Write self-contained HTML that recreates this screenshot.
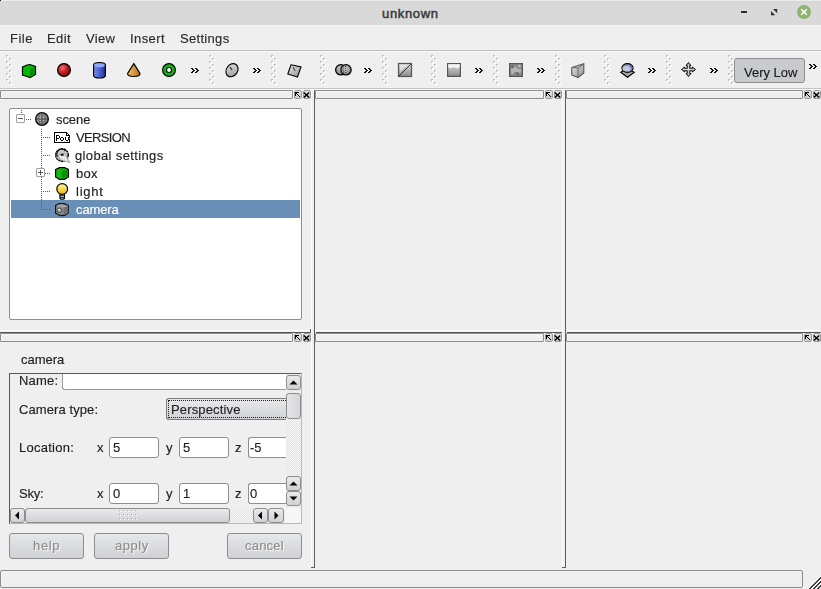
<!DOCTYPE html><html><head><meta charset="utf-8"><title>unknown</title><style>
*{margin:0;padding:0;box-sizing:border-box}
html,body{width:821px;height:589px;overflow:hidden;background:#efefef;font-family:"Liberation Sans",sans-serif;color:#2f2f2f;position:relative}
.a{position:absolute;white-space:nowrap}
svg{position:absolute;overflow:visible}
.t13{font-size:13px;line-height:15px;will-change:transform;-webkit-text-stroke:0.15px currentColor}
.dbar{height:9px;border:1px solid #8c8c8c;border-radius:1px;background:#efefef;box-shadow:inset 1px 1px 0 #f7f7f7}
.dbtn{width:8px;height:9px}
</style></head><body>
<div class="a" style="left:0;top:0;width:821px;height:25px;background:#d9d9d9;border-top:1px solid #ececec"></div>
<div class="a" style="left:0;top:1px;width:821px;height:1px;background:#d5d5d5"></div>
<div class="a" style="left:0;top:0;width:1px;height:1px;background:#222"></div>
<div class="a" style="left:0;top:25px;width:821px;height:1px;background:#f6f6f6"></div>
<div class="a" style="left:382px;top:6px;font-size:13px;line-height:15px;color:#3a3a3a;-webkit-text-stroke:0.5px #3a3a3a;letter-spacing:0.65px">unknown</div>
<div class="a" style="left:741px;top:11px;width:6px;height:2px;background:#2e2e2e"></div>
<svg style="left:770px;top:8px" width="9" height="9" shape-rendering="geometricPrecision"><path d="M3 1h4.2v4.2zM1 3l4.2 4.2h-4.2z" fill="#303030"/></svg>
<svg style="left:797px;top:5px" width="14" height="14"><circle cx="7" cy="7" r="7" fill="#8db371"/><path d="M4.2 4.2l5.6 5.6M9.8 4.2l-5.6 5.6" stroke="#fff" stroke-width="1.6"/></svg>
<div class="a t13" style="left:10px;top:31px;color:#2a2a2a;font-weight:normal;letter-spacing:0.47px;">File</div>
<div class="a t13" style="left:47px;top:31px;color:#2a2a2a;font-weight:normal;letter-spacing:0.43px;">Edit</div>
<div class="a t13" style="left:86px;top:31px;color:#2a2a2a;font-weight:normal;letter-spacing:0.30px;">View</div>
<div class="a t13" style="left:130px;top:31px;color:#2a2a2a;font-weight:normal;letter-spacing:0.40px;">Insert</div>
<div class="a t13" style="left:180px;top:31px;color:#2a2a2a;font-weight:normal;letter-spacing:0.31px;">Settings</div>
<div class="a" style="left:0;top:50px;width:821px;height:1px;background:#bfbfbf"></div>
<div class="a" style="left:0;top:51px;width:821px;height:1px;background:#fafafa"></div>
<div class="a" style="left:0;top:88px;width:821px;height:1px;background:#c4c4c4"></div>
<div class="a" style="left:0;top:89px;width:821px;height:1px;background:#fbfbfb"></div>
<svg style="left:6px;top:55px" width="6" height="31" shape-rendering="crispEdges"><rect x="1" y="1" width="2" height="2" fill="#fdfdfd"/><path d="M0 0h2v1h-1v1h-1z" fill="#bfbfbf"/><rect x="4" y="4" width="2" height="2" fill="#fdfdfd"/><path d="M3 3h2v1h-1v1h-1z" fill="#bfbfbf"/><rect x="1" y="7" width="2" height="2" fill="#fdfdfd"/><path d="M0 6h2v1h-1v1h-1z" fill="#bfbfbf"/><rect x="4" y="10" width="2" height="2" fill="#fdfdfd"/><path d="M3 9h2v1h-1v1h-1z" fill="#bfbfbf"/><rect x="1" y="13" width="2" height="2" fill="#fdfdfd"/><path d="M0 12h2v1h-1v1h-1z" fill="#bfbfbf"/><rect x="4" y="16" width="2" height="2" fill="#fdfdfd"/><path d="M3 15h2v1h-1v1h-1z" fill="#bfbfbf"/><rect x="1" y="19" width="2" height="2" fill="#fdfdfd"/><path d="M0 18h2v1h-1v1h-1z" fill="#bfbfbf"/><rect x="4" y="22" width="2" height="2" fill="#fdfdfd"/><path d="M3 21h2v1h-1v1h-1z" fill="#bfbfbf"/><rect x="1" y="25" width="2" height="2" fill="#fdfdfd"/><path d="M0 24h2v1h-1v1h-1z" fill="#bfbfbf"/><rect x="4" y="28" width="2" height="2" fill="#fdfdfd"/><path d="M3 27h2v1h-1v1h-1z" fill="#bfbfbf"/></svg>
<svg style="left:209px;top:55px" width="6" height="31" shape-rendering="crispEdges"><rect x="1" y="1" width="2" height="2" fill="#fdfdfd"/><path d="M0 0h2v1h-1v1h-1z" fill="#bfbfbf"/><rect x="4" y="4" width="2" height="2" fill="#fdfdfd"/><path d="M3 3h2v1h-1v1h-1z" fill="#bfbfbf"/><rect x="1" y="7" width="2" height="2" fill="#fdfdfd"/><path d="M0 6h2v1h-1v1h-1z" fill="#bfbfbf"/><rect x="4" y="10" width="2" height="2" fill="#fdfdfd"/><path d="M3 9h2v1h-1v1h-1z" fill="#bfbfbf"/><rect x="1" y="13" width="2" height="2" fill="#fdfdfd"/><path d="M0 12h2v1h-1v1h-1z" fill="#bfbfbf"/><rect x="4" y="16" width="2" height="2" fill="#fdfdfd"/><path d="M3 15h2v1h-1v1h-1z" fill="#bfbfbf"/><rect x="1" y="19" width="2" height="2" fill="#fdfdfd"/><path d="M0 18h2v1h-1v1h-1z" fill="#bfbfbf"/><rect x="4" y="22" width="2" height="2" fill="#fdfdfd"/><path d="M3 21h2v1h-1v1h-1z" fill="#bfbfbf"/><rect x="1" y="25" width="2" height="2" fill="#fdfdfd"/><path d="M0 24h2v1h-1v1h-1z" fill="#bfbfbf"/><rect x="4" y="28" width="2" height="2" fill="#fdfdfd"/><path d="M3 27h2v1h-1v1h-1z" fill="#bfbfbf"/></svg>
<svg style="left:271px;top:55px" width="6" height="31" shape-rendering="crispEdges"><rect x="1" y="1" width="2" height="2" fill="#fdfdfd"/><path d="M0 0h2v1h-1v1h-1z" fill="#bfbfbf"/><rect x="4" y="4" width="2" height="2" fill="#fdfdfd"/><path d="M3 3h2v1h-1v1h-1z" fill="#bfbfbf"/><rect x="1" y="7" width="2" height="2" fill="#fdfdfd"/><path d="M0 6h2v1h-1v1h-1z" fill="#bfbfbf"/><rect x="4" y="10" width="2" height="2" fill="#fdfdfd"/><path d="M3 9h2v1h-1v1h-1z" fill="#bfbfbf"/><rect x="1" y="13" width="2" height="2" fill="#fdfdfd"/><path d="M0 12h2v1h-1v1h-1z" fill="#bfbfbf"/><rect x="4" y="16" width="2" height="2" fill="#fdfdfd"/><path d="M3 15h2v1h-1v1h-1z" fill="#bfbfbf"/><rect x="1" y="19" width="2" height="2" fill="#fdfdfd"/><path d="M0 18h2v1h-1v1h-1z" fill="#bfbfbf"/><rect x="4" y="22" width="2" height="2" fill="#fdfdfd"/><path d="M3 21h2v1h-1v1h-1z" fill="#bfbfbf"/><rect x="1" y="25" width="2" height="2" fill="#fdfdfd"/><path d="M0 24h2v1h-1v1h-1z" fill="#bfbfbf"/><rect x="4" y="28" width="2" height="2" fill="#fdfdfd"/><path d="M3 27h2v1h-1v1h-1z" fill="#bfbfbf"/></svg>
<svg style="left:320px;top:55px" width="6" height="31" shape-rendering="crispEdges"><rect x="1" y="1" width="2" height="2" fill="#fdfdfd"/><path d="M0 0h2v1h-1v1h-1z" fill="#bfbfbf"/><rect x="4" y="4" width="2" height="2" fill="#fdfdfd"/><path d="M3 3h2v1h-1v1h-1z" fill="#bfbfbf"/><rect x="1" y="7" width="2" height="2" fill="#fdfdfd"/><path d="M0 6h2v1h-1v1h-1z" fill="#bfbfbf"/><rect x="4" y="10" width="2" height="2" fill="#fdfdfd"/><path d="M3 9h2v1h-1v1h-1z" fill="#bfbfbf"/><rect x="1" y="13" width="2" height="2" fill="#fdfdfd"/><path d="M0 12h2v1h-1v1h-1z" fill="#bfbfbf"/><rect x="4" y="16" width="2" height="2" fill="#fdfdfd"/><path d="M3 15h2v1h-1v1h-1z" fill="#bfbfbf"/><rect x="1" y="19" width="2" height="2" fill="#fdfdfd"/><path d="M0 18h2v1h-1v1h-1z" fill="#bfbfbf"/><rect x="4" y="22" width="2" height="2" fill="#fdfdfd"/><path d="M3 21h2v1h-1v1h-1z" fill="#bfbfbf"/><rect x="1" y="25" width="2" height="2" fill="#fdfdfd"/><path d="M0 24h2v1h-1v1h-1z" fill="#bfbfbf"/><rect x="4" y="28" width="2" height="2" fill="#fdfdfd"/><path d="M3 27h2v1h-1v1h-1z" fill="#bfbfbf"/></svg>
<svg style="left:382px;top:55px" width="6" height="31" shape-rendering="crispEdges"><rect x="1" y="1" width="2" height="2" fill="#fdfdfd"/><path d="M0 0h2v1h-1v1h-1z" fill="#bfbfbf"/><rect x="4" y="4" width="2" height="2" fill="#fdfdfd"/><path d="M3 3h2v1h-1v1h-1z" fill="#bfbfbf"/><rect x="1" y="7" width="2" height="2" fill="#fdfdfd"/><path d="M0 6h2v1h-1v1h-1z" fill="#bfbfbf"/><rect x="4" y="10" width="2" height="2" fill="#fdfdfd"/><path d="M3 9h2v1h-1v1h-1z" fill="#bfbfbf"/><rect x="1" y="13" width="2" height="2" fill="#fdfdfd"/><path d="M0 12h2v1h-1v1h-1z" fill="#bfbfbf"/><rect x="4" y="16" width="2" height="2" fill="#fdfdfd"/><path d="M3 15h2v1h-1v1h-1z" fill="#bfbfbf"/><rect x="1" y="19" width="2" height="2" fill="#fdfdfd"/><path d="M0 18h2v1h-1v1h-1z" fill="#bfbfbf"/><rect x="4" y="22" width="2" height="2" fill="#fdfdfd"/><path d="M3 21h2v1h-1v1h-1z" fill="#bfbfbf"/><rect x="1" y="25" width="2" height="2" fill="#fdfdfd"/><path d="M0 24h2v1h-1v1h-1z" fill="#bfbfbf"/><rect x="4" y="28" width="2" height="2" fill="#fdfdfd"/><path d="M3 27h2v1h-1v1h-1z" fill="#bfbfbf"/></svg>
<svg style="left:431px;top:55px" width="6" height="31" shape-rendering="crispEdges"><rect x="1" y="1" width="2" height="2" fill="#fdfdfd"/><path d="M0 0h2v1h-1v1h-1z" fill="#bfbfbf"/><rect x="4" y="4" width="2" height="2" fill="#fdfdfd"/><path d="M3 3h2v1h-1v1h-1z" fill="#bfbfbf"/><rect x="1" y="7" width="2" height="2" fill="#fdfdfd"/><path d="M0 6h2v1h-1v1h-1z" fill="#bfbfbf"/><rect x="4" y="10" width="2" height="2" fill="#fdfdfd"/><path d="M3 9h2v1h-1v1h-1z" fill="#bfbfbf"/><rect x="1" y="13" width="2" height="2" fill="#fdfdfd"/><path d="M0 12h2v1h-1v1h-1z" fill="#bfbfbf"/><rect x="4" y="16" width="2" height="2" fill="#fdfdfd"/><path d="M3 15h2v1h-1v1h-1z" fill="#bfbfbf"/><rect x="1" y="19" width="2" height="2" fill="#fdfdfd"/><path d="M0 18h2v1h-1v1h-1z" fill="#bfbfbf"/><rect x="4" y="22" width="2" height="2" fill="#fdfdfd"/><path d="M3 21h2v1h-1v1h-1z" fill="#bfbfbf"/><rect x="1" y="25" width="2" height="2" fill="#fdfdfd"/><path d="M0 24h2v1h-1v1h-1z" fill="#bfbfbf"/><rect x="4" y="28" width="2" height="2" fill="#fdfdfd"/><path d="M3 27h2v1h-1v1h-1z" fill="#bfbfbf"/></svg>
<svg style="left:493px;top:55px" width="6" height="31" shape-rendering="crispEdges"><rect x="1" y="1" width="2" height="2" fill="#fdfdfd"/><path d="M0 0h2v1h-1v1h-1z" fill="#bfbfbf"/><rect x="4" y="4" width="2" height="2" fill="#fdfdfd"/><path d="M3 3h2v1h-1v1h-1z" fill="#bfbfbf"/><rect x="1" y="7" width="2" height="2" fill="#fdfdfd"/><path d="M0 6h2v1h-1v1h-1z" fill="#bfbfbf"/><rect x="4" y="10" width="2" height="2" fill="#fdfdfd"/><path d="M3 9h2v1h-1v1h-1z" fill="#bfbfbf"/><rect x="1" y="13" width="2" height="2" fill="#fdfdfd"/><path d="M0 12h2v1h-1v1h-1z" fill="#bfbfbf"/><rect x="4" y="16" width="2" height="2" fill="#fdfdfd"/><path d="M3 15h2v1h-1v1h-1z" fill="#bfbfbf"/><rect x="1" y="19" width="2" height="2" fill="#fdfdfd"/><path d="M0 18h2v1h-1v1h-1z" fill="#bfbfbf"/><rect x="4" y="22" width="2" height="2" fill="#fdfdfd"/><path d="M3 21h2v1h-1v1h-1z" fill="#bfbfbf"/><rect x="1" y="25" width="2" height="2" fill="#fdfdfd"/><path d="M0 24h2v1h-1v1h-1z" fill="#bfbfbf"/><rect x="4" y="28" width="2" height="2" fill="#fdfdfd"/><path d="M3 27h2v1h-1v1h-1z" fill="#bfbfbf"/></svg>
<svg style="left:555px;top:55px" width="6" height="31" shape-rendering="crispEdges"><rect x="1" y="1" width="2" height="2" fill="#fdfdfd"/><path d="M0 0h2v1h-1v1h-1z" fill="#bfbfbf"/><rect x="4" y="4" width="2" height="2" fill="#fdfdfd"/><path d="M3 3h2v1h-1v1h-1z" fill="#bfbfbf"/><rect x="1" y="7" width="2" height="2" fill="#fdfdfd"/><path d="M0 6h2v1h-1v1h-1z" fill="#bfbfbf"/><rect x="4" y="10" width="2" height="2" fill="#fdfdfd"/><path d="M3 9h2v1h-1v1h-1z" fill="#bfbfbf"/><rect x="1" y="13" width="2" height="2" fill="#fdfdfd"/><path d="M0 12h2v1h-1v1h-1z" fill="#bfbfbf"/><rect x="4" y="16" width="2" height="2" fill="#fdfdfd"/><path d="M3 15h2v1h-1v1h-1z" fill="#bfbfbf"/><rect x="1" y="19" width="2" height="2" fill="#fdfdfd"/><path d="M0 18h2v1h-1v1h-1z" fill="#bfbfbf"/><rect x="4" y="22" width="2" height="2" fill="#fdfdfd"/><path d="M3 21h2v1h-1v1h-1z" fill="#bfbfbf"/><rect x="1" y="25" width="2" height="2" fill="#fdfdfd"/><path d="M0 24h2v1h-1v1h-1z" fill="#bfbfbf"/><rect x="4" y="28" width="2" height="2" fill="#fdfdfd"/><path d="M3 27h2v1h-1v1h-1z" fill="#bfbfbf"/></svg>
<svg style="left:604px;top:55px" width="6" height="31" shape-rendering="crispEdges"><rect x="1" y="1" width="2" height="2" fill="#fdfdfd"/><path d="M0 0h2v1h-1v1h-1z" fill="#bfbfbf"/><rect x="4" y="4" width="2" height="2" fill="#fdfdfd"/><path d="M3 3h2v1h-1v1h-1z" fill="#bfbfbf"/><rect x="1" y="7" width="2" height="2" fill="#fdfdfd"/><path d="M0 6h2v1h-1v1h-1z" fill="#bfbfbf"/><rect x="4" y="10" width="2" height="2" fill="#fdfdfd"/><path d="M3 9h2v1h-1v1h-1z" fill="#bfbfbf"/><rect x="1" y="13" width="2" height="2" fill="#fdfdfd"/><path d="M0 12h2v1h-1v1h-1z" fill="#bfbfbf"/><rect x="4" y="16" width="2" height="2" fill="#fdfdfd"/><path d="M3 15h2v1h-1v1h-1z" fill="#bfbfbf"/><rect x="1" y="19" width="2" height="2" fill="#fdfdfd"/><path d="M0 18h2v1h-1v1h-1z" fill="#bfbfbf"/><rect x="4" y="22" width="2" height="2" fill="#fdfdfd"/><path d="M3 21h2v1h-1v1h-1z" fill="#bfbfbf"/><rect x="1" y="25" width="2" height="2" fill="#fdfdfd"/><path d="M0 24h2v1h-1v1h-1z" fill="#bfbfbf"/><rect x="4" y="28" width="2" height="2" fill="#fdfdfd"/><path d="M3 27h2v1h-1v1h-1z" fill="#bfbfbf"/></svg>
<svg style="left:666px;top:55px" width="6" height="31" shape-rendering="crispEdges"><rect x="1" y="1" width="2" height="2" fill="#fdfdfd"/><path d="M0 0h2v1h-1v1h-1z" fill="#bfbfbf"/><rect x="4" y="4" width="2" height="2" fill="#fdfdfd"/><path d="M3 3h2v1h-1v1h-1z" fill="#bfbfbf"/><rect x="1" y="7" width="2" height="2" fill="#fdfdfd"/><path d="M0 6h2v1h-1v1h-1z" fill="#bfbfbf"/><rect x="4" y="10" width="2" height="2" fill="#fdfdfd"/><path d="M3 9h2v1h-1v1h-1z" fill="#bfbfbf"/><rect x="1" y="13" width="2" height="2" fill="#fdfdfd"/><path d="M0 12h2v1h-1v1h-1z" fill="#bfbfbf"/><rect x="4" y="16" width="2" height="2" fill="#fdfdfd"/><path d="M3 15h2v1h-1v1h-1z" fill="#bfbfbf"/><rect x="1" y="19" width="2" height="2" fill="#fdfdfd"/><path d="M0 18h2v1h-1v1h-1z" fill="#bfbfbf"/><rect x="4" y="22" width="2" height="2" fill="#fdfdfd"/><path d="M3 21h2v1h-1v1h-1z" fill="#bfbfbf"/><rect x="1" y="25" width="2" height="2" fill="#fdfdfd"/><path d="M0 24h2v1h-1v1h-1z" fill="#bfbfbf"/><rect x="4" y="28" width="2" height="2" fill="#fdfdfd"/><path d="M3 27h2v1h-1v1h-1z" fill="#bfbfbf"/></svg>
<svg style="left:728px;top:55px" width="6" height="31" shape-rendering="crispEdges"><rect x="1" y="1" width="2" height="2" fill="#fdfdfd"/><path d="M0 0h2v1h-1v1h-1z" fill="#bfbfbf"/><rect x="4" y="4" width="2" height="2" fill="#fdfdfd"/><path d="M3 3h2v1h-1v1h-1z" fill="#bfbfbf"/><rect x="1" y="7" width="2" height="2" fill="#fdfdfd"/><path d="M0 6h2v1h-1v1h-1z" fill="#bfbfbf"/><rect x="4" y="10" width="2" height="2" fill="#fdfdfd"/><path d="M3 9h2v1h-1v1h-1z" fill="#bfbfbf"/><rect x="1" y="13" width="2" height="2" fill="#fdfdfd"/><path d="M0 12h2v1h-1v1h-1z" fill="#bfbfbf"/><rect x="4" y="16" width="2" height="2" fill="#fdfdfd"/><path d="M3 15h2v1h-1v1h-1z" fill="#bfbfbf"/><rect x="1" y="19" width="2" height="2" fill="#fdfdfd"/><path d="M0 18h2v1h-1v1h-1z" fill="#bfbfbf"/><rect x="4" y="22" width="2" height="2" fill="#fdfdfd"/><path d="M3 21h2v1h-1v1h-1z" fill="#bfbfbf"/><rect x="1" y="25" width="2" height="2" fill="#fdfdfd"/><path d="M0 24h2v1h-1v1h-1z" fill="#bfbfbf"/><rect x="4" y="28" width="2" height="2" fill="#fdfdfd"/><path d="M3 27h2v1h-1v1h-1z" fill="#bfbfbf"/></svg>
<svg style="left:191px;top:68px" width="9" height="5" shape-rendering="crispEdges"><path d="M0 0h2v1h-2zM1 1h2v1h-2zM2 2h2v1h-2zM1 3h2v1h-2zM0 4h2v1h-2zM4 0h2v1h-2zM5 1h2v1h-2zM6 2h2v1h-2zM5 3h2v1h-2zM4 4h2v1h-2z" fill="#111"/></svg>
<svg style="left:253px;top:68px" width="9" height="5" shape-rendering="crispEdges"><path d="M0 0h2v1h-2zM1 1h2v1h-2zM2 2h2v1h-2zM1 3h2v1h-2zM0 4h2v1h-2zM4 0h2v1h-2zM5 1h2v1h-2zM6 2h2v1h-2zM5 3h2v1h-2zM4 4h2v1h-2z" fill="#111"/></svg>
<svg style="left:364px;top:68px" width="9" height="5" shape-rendering="crispEdges"><path d="M0 0h2v1h-2zM1 1h2v1h-2zM2 2h2v1h-2zM1 3h2v1h-2zM0 4h2v1h-2zM4 0h2v1h-2zM5 1h2v1h-2zM6 2h2v1h-2zM5 3h2v1h-2zM4 4h2v1h-2z" fill="#111"/></svg>
<svg style="left:475px;top:68px" width="9" height="5" shape-rendering="crispEdges"><path d="M0 0h2v1h-2zM1 1h2v1h-2zM2 2h2v1h-2zM1 3h2v1h-2zM0 4h2v1h-2zM4 0h2v1h-2zM5 1h2v1h-2zM6 2h2v1h-2zM5 3h2v1h-2zM4 4h2v1h-2z" fill="#111"/></svg>
<svg style="left:537px;top:68px" width="9" height="5" shape-rendering="crispEdges"><path d="M0 0h2v1h-2zM1 1h2v1h-2zM2 2h2v1h-2zM1 3h2v1h-2zM0 4h2v1h-2zM4 0h2v1h-2zM5 1h2v1h-2zM6 2h2v1h-2zM5 3h2v1h-2zM4 4h2v1h-2z" fill="#111"/></svg>
<svg style="left:648px;top:68px" width="9" height="5" shape-rendering="crispEdges"><path d="M0 0h2v1h-2zM1 1h2v1h-2zM2 2h2v1h-2zM1 3h2v1h-2zM0 4h2v1h-2zM4 0h2v1h-2zM5 1h2v1h-2zM6 2h2v1h-2zM5 3h2v1h-2zM4 4h2v1h-2z" fill="#111"/></svg>
<svg style="left:710px;top:68px" width="9" height="5" shape-rendering="crispEdges"><path d="M0 0h2v1h-2zM1 1h2v1h-2zM2 2h2v1h-2zM1 3h2v1h-2zM0 4h2v1h-2zM4 0h2v1h-2zM5 1h2v1h-2zM6 2h2v1h-2zM5 3h2v1h-2zM4 4h2v1h-2z" fill="#111"/></svg>
<svg style="left:809px;top:64px" width="9" height="5" shape-rendering="crispEdges"><path d="M0 0h2v1h-2zM1 1h2v1h-2zM2 2h2v1h-2zM1 3h2v1h-2zM0 4h2v1h-2zM4 0h2v1h-2zM5 1h2v1h-2zM6 2h2v1h-2zM5 3h2v1h-2zM4 4h2v1h-2z" fill="#111"/></svg>
<svg width="0" height="0" style="position:absolute"><defs>
<linearGradient id="gGreen" x1="0" y1="0" x2="1" y2="1"><stop offset="0" stop-color="#10d010"/><stop offset="1" stop-color="#008a00"/></linearGradient>
<radialGradient id="gRed" cx="0.38" cy="0.35" r="0.7"><stop offset="0" stop-color="#f07070"/><stop offset="0.5" stop-color="#c02020"/><stop offset="1" stop-color="#7a0a0a"/></radialGradient>
<linearGradient id="gBlue" x1="0" y1="0" x2="1" y2="0"><stop offset="0" stop-color="#7890f0"/><stop offset="0.6" stop-color="#4058c8"/><stop offset="1" stop-color="#203090"/></linearGradient>
<linearGradient id="gOrange" x1="0" y1="0" x2="1" y2="0"><stop offset="0" stop-color="#f8c060"/><stop offset="1" stop-color="#b87018"/></linearGradient>
<linearGradient id="gGray" x1="0" y1="0" x2="1" y2="1"><stop offset="0" stop-color="#e8e8e8"/><stop offset="1" stop-color="#909090"/></linearGradient>
<linearGradient id="gGrayV" x1="0" y1="0" x2="0" y2="1"><stop offset="0" stop-color="#e0e0e0"/><stop offset="1" stop-color="#8a8a8a"/></linearGradient>
<radialGradient id="gGlobe" cx="0.45" cy="0.4" r="0.65"><stop offset="0" stop-color="#c8c8c8"/><stop offset="0.7" stop-color="#8a8a8a"/><stop offset="1" stop-color="#505050"/></radialGradient>
<linearGradient id="gBulb" x1="0" y1="0" x2="0" y2="1"><stop offset="0" stop-color="#fff8a0"/><stop offset="1" stop-color="#f0b800"/></linearGradient>
<linearGradient id="gBtn" x1="0" y1="0" x2="0" y2="1"><stop offset="0" stop-color="#e6e7ea"/><stop offset="1" stop-color="#d0d1d4"/></linearGradient>
</defs></svg>
<svg style="left:22px;top:64px" width="15" height="14" viewBox="0 0 15 14"><path d="M0.5 3L5 1 L8 0.5 L13.5 2.5 V10.5 L8 13.5 L5 12.5 L0.5 11z" fill="#06b806" stroke="#000" stroke-width="1.2"/><path d="M8 5 L13 3 V10.5 L8 13z" fill="#068e06"/></svg>
<svg style="left:57px;top:63px" width="15" height="15" viewBox="0 0 15 15"><circle cx="7" cy="7" r="6.4" fill="url(#gRed)" stroke="#000" stroke-width="1.2"/></svg>
<svg style="left:93px;top:62px" width="13" height="17" viewBox="0 0 13 17"><path d="M0.6 3 A5.9 2.5 0 0 1 12.4 3 V13.5 A5.9 2.5 0 0 1 0.6 13.5z" fill="url(#gBlue)" stroke="#000" stroke-width="1.2"/><ellipse cx="6.5" cy="3.2" rx="5.3" ry="2" fill="#90a8f8"/></svg>
<svg style="left:127px;top:63px" width="14" height="15" viewBox="0 0 14 15"><path d="M6.8 0.6 L13 10.5 Q13 13.5 6.8 13.5 Q0.6 13.5 0.6 10.5z" fill="url(#gOrange)" stroke="#000" stroke-width="1.2"/></svg>
<svg style="left:162px;top:63px" width="15" height="15" viewBox="0 0 15 15"><circle cx="7" cy="7" r="6.4" fill="#14c014" stroke="#000" stroke-width="1.2"/><circle cx="7" cy="7" r="4.3" fill="none" stroke="#0a9a0a" stroke-width="1.2" opacity=".5"/><circle cx="7" cy="7" r="2.5" fill="#fff" stroke="#000" stroke-width="1.1"/></svg>
<svg style="left:225px;top:63px" width="14" height="15" viewBox="0 0 14 15"><ellipse cx="7" cy="7.2" rx="5.6" ry="7" transform="rotate(35 7 7.2)" fill="url(#gGray)" stroke="#000" stroke-width="1.1"/><path d="M5 4 L7 7" stroke="#222" stroke-width="1.2"/></svg>
<svg style="left:287px;top:64px" width="15" height="14" viewBox="0 0 15 14"><path d="M4 0.8 L14 3 L10.5 13 L0.8 10z" fill="url(#gGray)" stroke="#000" stroke-width="1.1"/><path d="M6 3 L8 7" stroke="#333" stroke-width="1"/></svg>
<svg style="left:335px;top:64px" width="17" height="12" viewBox="0 0 17 12"><circle cx="5.8" cy="5.8" r="5.2" fill="url(#gGlobe)" stroke="#000" stroke-width="1.2"/><circle cx="11" cy="5.8" r="5.2" fill="url(#gGlobe)" stroke="#000" stroke-width="1.2"/><path d="M8.4 1.5V10M6.5 2V10M10.5 2V10" stroke="#333" stroke-width="0.8" stroke-dasharray="1 1"/></svg>
<svg style="left:398px;top:63px" width="15" height="15" viewBox="0 0 15 15"><rect x="0.5" y="0.5" width="13" height="13" fill="url(#gGrayV)" stroke="#555" stroke-width="1.2"/><path d="M1 13 L13 1" stroke="#333" stroke-width="1"/><path d="M2 9 L9 2 H2z" fill="#eee" opacity=".6"/></svg>
<svg style="left:447px;top:63px" width="15" height="15" viewBox="0 0 15 15"><rect x="0.6" y="0.6" width="12.8" height="12.8" fill="url(#gGrayV)" stroke="#555" stroke-width="1.2"/><path d="M1.2 1.2H12.8V4.5 L10 5.8 L7 4.8 L4 5.8 L1.2 4.8z" fill="#f2f2f2"/><path d="M1.2 4.8 L4 5.8 L7 4.8 L10 5.8 L12.8 4.5" stroke="#b0b0b0" fill="none" stroke-width=".7"/></svg>
<svg style="left:509px;top:63px" width="15" height="15" viewBox="0 0 15 15"><rect x="0.6" y="0.6" width="12.8" height="12.8" fill="#8a8a8a" stroke="#555" stroke-width="1.2"/><path d="M2 6 Q4 2 7 4 Q9 7 12 6 V9 Q10 11 8 9 Q5 8 4 11 Q2 12 2 9z" fill="#b4b4b4"/><circle cx="3.5" cy="3.8" r="1.6" fill="#6a6a6a"/><circle cx="8.5" cy="10.5" r="1.5" fill="#6a6a6a"/><circle cx="10.5" cy="3" r="1.2" fill="#c8c8c8"/></svg>
<svg style="left:571px;top:63px" width="14" height="16" viewBox="0 0 14 16"><path d="M0.8 4.5 L12.8 0.8 V10 L7 14.5 L0.8 12z" fill="url(#gGray)" stroke="#555" stroke-width="1.1"/><path d="M7 5 V14 M0.8 4.5 L7 5 L12.8 0.8" stroke="#666" fill="none" stroke-width="1"/></svg>
<svg style="left:620px;top:63px" width="15" height="15" viewBox="0 0 15 15"><path d="M7.5 5.5 L14.3 9.2 L7.5 14.3 L0.7 9.2z" fill="#8c8c8c" stroke="#000" stroke-width="1.1"/><path d="M7.5 7 L13 9.2 L7.5 13 L2 9.2z" fill="#a8a8a8"/><ellipse cx="7.5" cy="5" rx="5.6" ry="4.4" fill="#8a98c8" stroke="#000" stroke-width="1.1"/><ellipse cx="6.5" cy="5.6" rx="4" ry="2.6" fill="#c4c8d8"/><path d="M10 2.5 Q12 3.5 12 5.5" stroke="#5060e0" stroke-width="1.4" fill="none"/></svg>
<svg style="left:681px;top:62px" width="16" height="16" viewBox="0 0 16 16"><polygon points="6.20,3.50 5.10,3.50 7.50,0.50 9.90,3.50 8.80,3.50 8.80,6.20 11.50,6.20 11.50,5.10 14.50,7.50 11.50,9.90 11.50,8.80 8.80,8.80 8.80,11.50 9.90,11.50 7.50,14.50 5.10,11.50 6.20,11.50 6.20,8.80 3.50,8.80 3.50,9.90 0.50,7.50 3.50,5.10 3.50,6.20 6.20,6.20" fill="#b0b0b0" stroke="#0a0a0a" stroke-width="1" stroke-linejoin="round"/><path d="M7.5 2.5V12.5M2.5 7.5H12.5" stroke="#e0e0e0" stroke-width=".7"/></svg>
<div class="a" style="left:734px;top:58px;width:71px;height:25px;border:1px solid #8e8e8e;border-radius:3px;background:#c9cacd"></div>
<div class="a t13" style="left:744px;top:65px;color:#1a1a1a;font-weight:normal;">Very Low</div>
<div class="a dbar" style="left:0px;top:90px;width:293px"></div>
<div class="a" style="left:294px;top:90px;width:8px;height:9px;border:1px solid #9a9a9a;border-radius:2px;background:linear-gradient(#e4e4e4,#cdcdcd)"></div>
<svg style="left:295px;top:92px" width="7" height="7" shape-rendering="crispEdges"><path d="M0 0h4v1h-2v1h1v1h1v1h1v1h-1v-1h-1v-1h-1v-1h-1v2h-1z" fill="#000"/></svg>
<div class="a" style="left:303px;top:90px;width:8px;height:9px;border:1px solid #9a9a9a;border-radius:2px;background:linear-gradient(#e4e4e4,#cdcdcd)"></div>
<svg style="left:303px;top:92px" width="7" height="6"><path d="M0.8 0.5l5.4 5M6.2 0.5l-5.4 5" stroke="#000" stroke-width="1.5"/></svg>
<div class="a dbar" style="left:315px;top:90px;width:229px"></div>
<div class="a" style="left:545px;top:90px;width:8px;height:9px;border:1px solid #9a9a9a;border-radius:2px;background:linear-gradient(#e4e4e4,#cdcdcd)"></div>
<svg style="left:546px;top:92px" width="7" height="7" shape-rendering="crispEdges"><path d="M0 0h4v1h-2v1h1v1h1v1h1v1h-1v-1h-1v-1h-1v-1h-1v2h-1z" fill="#000"/></svg>
<div class="a" style="left:554px;top:90px;width:8px;height:9px;border:1px solid #9a9a9a;border-radius:2px;background:linear-gradient(#e4e4e4,#cdcdcd)"></div>
<svg style="left:554px;top:92px" width="7" height="6"><path d="M0.8 0.5l5.4 5M6.2 0.5l-5.4 5" stroke="#000" stroke-width="1.5"/></svg>
<div class="a dbar" style="left:566px;top:90px;width:237px"></div>
<div class="a" style="left:804px;top:90px;width:8px;height:9px;border:1px solid #9a9a9a;border-radius:2px;background:linear-gradient(#e4e4e4,#cdcdcd)"></div>
<svg style="left:805px;top:92px" width="7" height="7" shape-rendering="crispEdges"><path d="M0 0h4v1h-2v1h1v1h1v1h1v1h-1v-1h-1v-1h-1v-1h-1v2h-1z" fill="#000"/></svg>
<div class="a" style="left:813px;top:90px;width:8px;height:9px;border:1px solid #9a9a9a;border-radius:2px;background:linear-gradient(#e4e4e4,#cdcdcd)"></div>
<svg style="left:813px;top:92px" width="7" height="6"><path d="M0.8 0.5l5.4 5M6.2 0.5l-5.4 5" stroke="#000" stroke-width="1.5"/></svg>
<div class="a dbar" style="left:0px;top:333px;width:293px"></div>
<div class="a" style="left:294px;top:333px;width:8px;height:9px;border:1px solid #9a9a9a;border-radius:2px;background:linear-gradient(#e4e4e4,#cdcdcd)"></div>
<svg style="left:295px;top:335px" width="7" height="7" shape-rendering="crispEdges"><path d="M0 0h4v1h-2v1h1v1h1v1h1v1h-1v-1h-1v-1h-1v-1h-1v2h-1z" fill="#000"/></svg>
<div class="a" style="left:303px;top:333px;width:8px;height:9px;border:1px solid #9a9a9a;border-radius:2px;background:linear-gradient(#e4e4e4,#cdcdcd)"></div>
<svg style="left:303px;top:335px" width="7" height="6"><path d="M0.8 0.5l5.4 5M6.2 0.5l-5.4 5" stroke="#000" stroke-width="1.5"/></svg>
<div class="a dbar" style="left:315px;top:333px;width:229px"></div>
<div class="a" style="left:545px;top:333px;width:8px;height:9px;border:1px solid #9a9a9a;border-radius:2px;background:linear-gradient(#e4e4e4,#cdcdcd)"></div>
<svg style="left:546px;top:335px" width="7" height="7" shape-rendering="crispEdges"><path d="M0 0h4v1h-2v1h1v1h1v1h1v1h-1v-1h-1v-1h-1v-1h-1v2h-1z" fill="#000"/></svg>
<div class="a" style="left:554px;top:333px;width:8px;height:9px;border:1px solid #9a9a9a;border-radius:2px;background:linear-gradient(#e4e4e4,#cdcdcd)"></div>
<svg style="left:554px;top:335px" width="7" height="6"><path d="M0.8 0.5l5.4 5M6.2 0.5l-5.4 5" stroke="#000" stroke-width="1.5"/></svg>
<div class="a dbar" style="left:566px;top:333px;width:237px"></div>
<div class="a" style="left:804px;top:333px;width:8px;height:9px;border:1px solid #9a9a9a;border-radius:2px;background:linear-gradient(#e4e4e4,#cdcdcd)"></div>
<svg style="left:805px;top:335px" width="7" height="7" shape-rendering="crispEdges"><path d="M0 0h4v1h-2v1h1v1h1v1h1v1h-1v-1h-1v-1h-1v-1h-1v2h-1z" fill="#000"/></svg>
<div class="a" style="left:813px;top:333px;width:8px;height:9px;border:1px solid #9a9a9a;border-radius:2px;background:linear-gradient(#e4e4e4,#cdcdcd)"></div>
<svg style="left:813px;top:335px" width="7" height="6"><path d="M0.8 0.5l5.4 5M6.2 0.5l-5.4 5" stroke="#000" stroke-width="1.5"/></svg>
<div class="a" style="left:0;top:330px;width:311px;height:1px;background:#fdfdfd"></div>
<div class="a" style="left:0;top:332px;width:311px;height:1px;background:#5a5a5a"></div>
<div class="a" style="left:310px;top:329px;width:1px;height:4px;background:#5a5a5a"></div>
<div class="a" style="left:316px;top:330px;width:247px;height:1px;background:#fdfdfd"></div>
<div class="a" style="left:316px;top:332px;width:247px;height:1px;background:#5a5a5a"></div>
<div class="a" style="left:562px;top:329px;width:1px;height:4px;background:#5a5a5a"></div>
<div class="a" style="left:567px;top:330px;width:254px;height:1px;background:#fdfdfd"></div>
<div class="a" style="left:567px;top:332px;width:254px;height:1px;background:#5a5a5a"></div>
<div class="a" style="left:311px;top:90px;width:1px;height:477px;background:#fbfbfb"></div>
<div class="a" style="left:314px;top:90px;width:1px;height:478px;background:#5f5f5f"></div>
<div class="a" style="left:311px;top:567px;width:3px;height:1px;background:#5f5f5f"></div>
<div class="a" style="left:562px;top:90px;width:1px;height:477px;background:#fbfbfb"></div>
<div class="a" style="left:565px;top:90px;width:1px;height:478px;background:#5f5f5f"></div>
<div class="a" style="left:562px;top:567px;width:3px;height:1px;background:#5f5f5f"></div>
<div class="a" style="left:9px;top:108px;width:293px;height:212px;background:#fff;border:1px solid #8e8e8e;border-radius:2px"></div>
<div class="a" style="left:11px;top:200px;width:289px;height:18px;background:#6a8fb6"></div>
<div class="a t13" style="left:56px;top:112px;color:#1e1e1e;font-weight:normal;letter-spacing:-0.08px;">scene</div>
<div class="a t13" style="left:76px;top:130px;color:#1e1e1e;font-weight:normal;letter-spacing:-0.65px;">VERSION</div>
<div class="a t13" style="left:75px;top:148px;color:#1e1e1e;font-weight:normal;letter-spacing:0.36px;">global settings</div>
<div class="a t13" style="left:76px;top:166px;color:#1e1e1e;font-weight:normal;letter-spacing:0.25px;">box</div>
<div class="a t13" style="left:76px;top:184px;color:#1e1e1e;font-weight:normal;letter-spacing:0.75px;">light</div>
<div class="a t13" style="left:76px;top:202px;color:#fff;font-weight:normal;letter-spacing:-0.12px;">camera</div>
<svg style="left:21px;top:110px" width="1" height="4" shape-rendering="crispEdges"><path d="M0 0h1v1h-1zM0 2h1v1h-1z" fill="#5a5a5a"/></svg>
<div class="a" style="left:16px;top:114px;width:9px;height:9px;border:1px solid #a0a0a0;border-radius:1px;background:#fff"></div>
<div class="a" style="left:18px;top:118px;width:5px;height:1px;background:#5a5a5a"></div>
<svg style="left:26px;top:119px" width="5" height="1" shape-rendering="crispEdges"><path d="M0 0h1v1h-1zM2 0h1v1h-1zM4 0h1v1h-1z" fill="#5a5a5a"/></svg>
<svg style="left:41px;top:129px" width="1" height="81" shape-rendering="crispEdges"><path d="M0 0h1v1h-1zM0 2h1v1h-1zM0 4h1v1h-1zM0 6h1v1h-1zM0 8h1v1h-1zM0 10h1v1h-1zM0 12h1v1h-1zM0 14h1v1h-1zM0 16h1v1h-1zM0 18h1v1h-1zM0 20h1v1h-1zM0 22h1v1h-1zM0 24h1v1h-1zM0 26h1v1h-1zM0 28h1v1h-1zM0 30h1v1h-1zM0 32h1v1h-1zM0 34h1v1h-1zM0 36h1v1h-1zM0 38h1v1h-1zM0 40h1v1h-1zM0 42h1v1h-1zM0 44h1v1h-1zM0 46h1v1h-1zM0 48h1v1h-1zM0 50h1v1h-1zM0 52h1v1h-1zM0 54h1v1h-1zM0 56h1v1h-1zM0 58h1v1h-1zM0 60h1v1h-1zM0 62h1v1h-1zM0 64h1v1h-1zM0 66h1v1h-1zM0 68h1v1h-1zM0 70h1v1h-1zM0 72h1v1h-1zM0 74h1v1h-1zM0 76h1v1h-1zM0 78h1v1h-1zM0 80h1v1h-1z" fill="#5a5a5a"/></svg>
<svg style="left:43px;top:137px" width="8" height="1" shape-rendering="crispEdges"><path d="M0 0h1v1h-1zM2 0h1v1h-1zM4 0h1v1h-1zM6 0h1v1h-1z" fill="#5a5a5a"/></svg>
<svg style="left:43px;top:155px" width="8" height="1" shape-rendering="crispEdges"><path d="M0 0h1v1h-1zM2 0h1v1h-1zM4 0h1v1h-1zM6 0h1v1h-1z" fill="#5a5a5a"/></svg>
<svg style="left:43px;top:173px" width="8" height="1" shape-rendering="crispEdges"><path d="M0 0h1v1h-1zM2 0h1v1h-1zM4 0h1v1h-1zM6 0h1v1h-1z" fill="#5a5a5a"/></svg>
<svg style="left:43px;top:191px" width="8" height="1" shape-rendering="crispEdges"><path d="M0 0h1v1h-1zM2 0h1v1h-1zM4 0h1v1h-1zM6 0h1v1h-1z" fill="#5a5a5a"/></svg>
<svg style="left:43px;top:209px" width="8" height="1" shape-rendering="crispEdges"><path d="M0 0h1v1h-1zM2 0h1v1h-1zM4 0h1v1h-1zM6 0h1v1h-1z" fill="#5a5a5a"/></svg>
<div class="a" style="left:36px;top:168px;width:9px;height:9px;border:1px solid #a0a0a0;border-radius:1px;background:#fff"></div>
<div class="a" style="left:38px;top:172px;width:5px;height:1px;background:#5a5a5a"></div>
<div class="a" style="left:40px;top:170px;width:1px;height:5px;background:#5a5a5a"></div>
<svg style="left:35px;top:112px" width="14" height="14" viewBox="0 0 14 14"><circle cx="7" cy="7" r="6.3" fill="url(#gGlobe)" stroke="#000" stroke-width="1.3"/><path d="M7 1V13M1 7H13" stroke="#3a3a3a" stroke-width="1" fill="none"/><ellipse cx="7" cy="7" rx="3.2" ry="6" fill="none" stroke="#555" stroke-width=".7"/><path d="M1.5 4.2H12.5M1.5 9.8H12.5" stroke="#666" stroke-width=".6"/></svg>
<svg style="left:54px;top:132px" width="16" height="11" shape-rendering="crispEdges"><path d="M1 1h13v1h1v1h1v8h-15z" fill="#fff"/><path d="M0 0h1v1h-1zM0 1h1v1h-1zM0 2h1v1h-1zM0 3h1v1h-1zM0 4h1v1h-1zM0 5h1v1h-1zM0 6h1v1h-1zM0 7h1v1h-1zM0 8h1v1h-1zM0 9h1v1h-1zM0 10h1v1h-1zM1 0h1v1h-1zM1 10h1v1h-1zM2 0h1v1h-1zM2 3h1v1h-1zM2 4h1v1h-1zM2 5h1v1h-1zM2 6h1v1h-1zM2 7h1v1h-1zM2 8h1v1h-1zM2 10h1v1h-1zM3 0h1v1h-1zM3 3h1v1h-1zM3 6h1v1h-1zM3 10h1v1h-1zM4 0h1v1h-1zM4 3h1v1h-1zM4 6h1v1h-1zM4 10h1v1h-1zM5 0h1v1h-1zM5 4h1v1h-1zM5 5h1v1h-1zM5 10h1v1h-1zM6 0h1v1h-1zM6 6h1v1h-1zM6 7h1v1h-1zM6 10h1v1h-1zM7 0h1v1h-1zM7 5h1v1h-1zM7 8h1v1h-1zM7 10h1v1h-1zM8 0h1v1h-1zM8 5h1v1h-1zM8 8h1v1h-1zM8 10h1v1h-1zM9 0h1v1h-1zM9 6h1v1h-1zM9 7h1v1h-1zM9 10h1v1h-1zM10 0h1v1h-1zM10 10h1v1h-1zM11 0h1v1h-1zM11 5h1v1h-1zM11 6h1v1h-1zM11 7h1v1h-1zM11 10h1v1h-1zM12 0h1v1h-1zM12 1h1v1h-1zM12 2h1v1h-1zM12 3h1v1h-1zM12 8h1v1h-1zM12 10h1v1h-1zM13 1h1v1h-1zM13 3h1v1h-1zM13 8h1v1h-1zM13 10h1v1h-1zM14 2h1v1h-1zM14 3h1v1h-1zM14 5h1v1h-1zM14 6h1v1h-1zM14 7h1v1h-1zM14 10h1v1h-1zM15 3h1v1h-1zM15 4h1v1h-1zM15 5h1v1h-1zM15 6h1v1h-1zM15 7h1v1h-1zM15 8h1v1h-1zM15 9h1v1h-1zM15 10h1v1h-1z" fill="#000"/><path d="M9.5 9.5h1M12.5 9.5h1M14.5 6.5h1" stroke="#f4b0b0" stroke-width="1"/></svg>
<svg style="left:55px;top:148px" width="16" height="16" viewBox="0 0 16 16"><circle cx="7" cy="7" r="6.3" fill="#c8c8c8" stroke="#000" stroke-width="1.4" stroke-dasharray="2.2 .6"/><path d="M2.6 8.5 A4.6 4.6 0 0 1 10.5 3.2" stroke="#1a1a1a" stroke-width="1.2" fill="none"/><path d="M3.5 8 Q6 4.5 9.5 5.5 L15 14.5 L11 13.5 Q6 12.5 4 10z" fill="#e6e6e6" stroke="#777" stroke-width=".6"/><ellipse cx="7.2" cy="6.8" rx="1.8" ry="1.1" fill="#222"/></svg>
<svg style="left:55px;top:167px" width="15" height="13" viewBox="0 0 15 13"><path d="M0.6 2.5L4.5 0.6 L9.5 0.6 L13.4 2.5 V10 L9.5 12.4 L4.5 12.4 L0.6 10z" fill="#10b810" stroke="#000" stroke-width="1.2"/><path d="M7 4 L13 2.5 V10 L7 12z" fill="#079007"/></svg>
<svg style="left:56px;top:183px" width="13" height="17" viewBox="0 0 13 17"><rect x="3.9" y="10.5" width="4.6" height="5.6" rx="1" fill="#f4f4f4" stroke="#000" stroke-width="1.1"/><path d="M4 12.7H8.4M4 14.4H8.4" stroke="#000" stroke-width=".9"/><circle cx="6.2" cy="6" r="5.4" fill="url(#gBulb)" stroke="#000" stroke-width="1.2"/></svg>
<svg style="left:55px;top:203px" width="14" height="14" viewBox="0 0 14 14"><path d="M0.6 2.5L3.5 0.8 L6 0.6 L9 0.6 L13.2 2.5 V10 L9.5 12.4 L5.5 12.6 L3 11.5 L0.6 10.2z" fill="#8e8e8e" stroke="#111" stroke-width="1.2"/><path d="M8.5 4.5 L12.8 2.8 V10 L8.5 12z" fill="#6e7074"/><path d="M1.2 2.8 L8.5 4.5 L12.8 2.8 L6 1.2z" fill="#a6a6a6"/><circle cx="4.6" cy="7.4" r="2.3" fill="#9a9a9a" stroke="#333" stroke-width=".7"/><circle cx="4" cy="6.8" r="1" fill="#f0f0f0"/></svg>
<div class="a t13" style="left:21px;top:352px;color:#1e1e1e;font-weight:normal;">camera</div>
<div class="a" style="left:9px;top:373px;width:293px;height:151px;border:1px solid #5a5a5a;border-right-color:#b8b8b8;border-bottom-color:#b8b8b8"></div>
<div class="a" style="left:62px;top:374px;width:224px;height:16px;background:#fff;border:1px solid #9a9a9a;border-top:none;border-right:none;border-radius:0 0 0 3px"></div>
<div class="a t13" style="left:19px;top:373px;color:#1e1e1e;font-weight:normal;letter-spacing:0.20px;">Name:</div>
<div class="a t13" style="left:19px;top:402px;color:#1e1e1e;font-weight:normal;letter-spacing:0.09px;">Camera type:</div>
<div class="a" style="left:166px;top:398px;width:125px;height:22px;border:1px solid #7d7d7d;border-right:none;border-radius:3px 0 0 3px;background:linear-gradient(#e9e9eb,#d1d2d5)"></div>
<div class="a" style="left:168px;top:400px;width:118px;height:18px;border:1px dotted #202020;border-right:none"></div>
<div class="a t13" style="left:171px;top:402px;color:#1e1e1e;font-weight:normal;letter-spacing:0.15px;">Perspective</div>
<div class="a t13" style="left:19px;top:440px;color:#1e1e1e;font-weight:normal;letter-spacing:0.25px;">Location:</div>
<div class="a t13" style="left:19px;top:486px;color:#1e1e1e;font-weight:normal;letter-spacing:-0.20px;">Sky:</div>
<div class="a t13" style="left:97px;top:440px;color:#1e1e1e;font-weight:normal;">x</div>
<div class="a" style="left:109px;top:437px;width:50px;height:21px;background:#fff;border:1px solid #8e8e8e;border-radius:3px"></div>
<div class="a t13" style="left:113px;top:440px;color:#1e1e1e;font-weight:normal;">5</div>
<div class="a t13" style="left:166px;top:440px;color:#1e1e1e;font-weight:normal;">y</div>
<div class="a" style="left:179px;top:437px;width:50px;height:21px;background:#fff;border:1px solid #8e8e8e;border-radius:3px"></div>
<div class="a t13" style="left:183px;top:440px;color:#1e1e1e;font-weight:normal;">5</div>
<div class="a t13" style="left:235px;top:440px;color:#1e1e1e;font-weight:normal;">z</div>
<div class="a" style="left:248px;top:437px;width:39px;height:21px;background:#fff;border:1px solid #8e8e8e;border-right:none;border-radius:3px 0 0 3px"></div>
<div class="a t13" style="left:250px;top:440px;color:#1e1e1e;font-weight:normal;">-5</div>
<div class="a t13" style="left:97px;top:486px;color:#1e1e1e;font-weight:normal;">x</div>
<div class="a" style="left:109px;top:483px;width:50px;height:21px;background:#fff;border:1px solid #8e8e8e;border-radius:3px"></div>
<div class="a t13" style="left:113px;top:486px;color:#1e1e1e;font-weight:normal;">0</div>
<div class="a t13" style="left:166px;top:486px;color:#1e1e1e;font-weight:normal;">y</div>
<div class="a" style="left:179px;top:483px;width:50px;height:21px;background:#fff;border:1px solid #8e8e8e;border-radius:3px"></div>
<div class="a t13" style="left:183px;top:486px;color:#1e1e1e;font-weight:normal;">1</div>
<div class="a t13" style="left:235px;top:486px;color:#1e1e1e;font-weight:normal;">z</div>
<div class="a" style="left:248px;top:483px;width:39px;height:21px;background:#fff;border:1px solid #8e8e8e;border-right:none;border-radius:3px 0 0 3px"></div>
<div class="a t13" style="left:250px;top:486px;color:#1e1e1e;font-weight:normal;">0</div>
<div class="a" style="left:286px;top:374px;width:15px;height:133px;background-color:#f7f7f7;background-image:linear-gradient(45deg,#e2e2e2 25%,transparent 25%,transparent 75%,#e2e2e2 75%),linear-gradient(45deg,#e2e2e2 25%,transparent 25%,transparent 75%,#e2e2e2 75%);background-size:2px 2px;background-position:0 0,1px 1px"></div>
<div class="a" style="left:286px;top:375px;width:15px;height:15px;border:1px solid #8e8e8e;border-radius:3px;background:linear-gradient(#eaeaec,#d0d1d4)"></div>
<svg style="left:0;top:0" width="821" height="589"><path d="M289.5 384.5h8l-4-4z" fill="#000"/></svg>
<div class="a" style="left:286px;top:393px;width:15px;height:26px;border:1px solid #8e8e8e;border-radius:3px;background:linear-gradient(90deg,#e4e4e6,#d6d7da)"></div>
<div class="a" style="left:286px;top:476px;width:15px;height:15px;border:1px solid #8e8e8e;border-radius:3px;background:linear-gradient(#eaeaec,#d0d1d4)"></div>
<svg style="left:0;top:0" width="821" height="589"><path d="M289.5 485.5h8l-4-4z" fill="#000"/></svg>
<div class="a" style="left:286px;top:491px;width:15px;height:15px;border:1px solid #8e8e8e;border-radius:3px;background:linear-gradient(#eaeaec,#d0d1d4)"></div>
<svg style="left:0;top:0" width="821" height="589"><path d="M289.5 496.5h8l-4 4z" fill="#000"/></svg>
<div class="a" style="left:10px;top:508px;width:275px;height:15px;background-color:#f7f7f7;background-image:linear-gradient(45deg,#e2e2e2 25%,transparent 25%,transparent 75%,#e2e2e2 75%),linear-gradient(45deg,#e2e2e2 25%,transparent 25%,transparent 75%,#e2e2e2 75%);background-size:2px 2px;background-position:0 0,1px 1px"></div>
<div class="a" style="left:285px;top:508px;width:16px;height:15px;background:#f6f6f6"></div>
<div class="a" style="left:10px;top:508px;width:15px;height:15px;border:1px solid #8e8e8e;border-radius:3px;background:linear-gradient(#eaeaec,#d0d1d4)"></div>
<svg style="left:0;top:0" width="821" height="589"><path d="M19.0 511.5v8l-4-4z" fill="#000"/></svg>
<div class="a" style="left:25px;top:508px;width:205px;height:15px;border:1px solid #8e8e8e;border-radius:3px;background:linear-gradient(#eaeaec,#d0d1d4)"></div>
<svg style="left:118px;top:509px" width="22" height="12" shape-rendering="crispEdges"><path d="M2 2h1v1h-1zM2 6h1v1h-1zM2 10h1v1h-1zM6 2h1v1h-1zM6 6h1v1h-1zM6 10h1v1h-1zM10 2h1v1h-1zM10 6h1v1h-1zM10 10h1v1h-1zM14 2h1v1h-1zM14 6h1v1h-1zM14 10h1v1h-1zM18 2h1v1h-1zM18 6h1v1h-1zM18 10h1v1h-1z" fill="#fafafa"/><path d="M1 1h1v1h-1zM1 5h1v1h-1zM1 9h1v1h-1zM5 1h1v1h-1zM5 5h1v1h-1zM5 9h1v1h-1zM9 1h1v1h-1zM9 5h1v1h-1zM9 9h1v1h-1zM13 1h1v1h-1zM13 5h1v1h-1zM13 9h1v1h-1zM17 1h1v1h-1zM17 5h1v1h-1zM17 9h1v1h-1z" fill="#a8a8a8"/></svg>
<div class="a" style="left:253px;top:508px;width:15px;height:15px;border:1px solid #8e8e8e;border-radius:3px;background:linear-gradient(#eaeaec,#d0d1d4)"></div>
<svg style="left:0;top:0" width="821" height="589"><path d="M262.0 511.5v8l-4-4z" fill="#000"/></svg>
<div class="a" style="left:268px;top:508px;width:16px;height:15px;border:1px solid #8e8e8e;border-radius:3px;background:linear-gradient(#eaeaec,#d0d1d4)"></div>
<svg style="left:0;top:0" width="821" height="589"><path d="M274.5 511.5v8l4-4z" fill="#000"/></svg>
<div class="a" style="left:9px;top:533px;width:75px;height:26px;border:1px solid #8e8e8e;border-radius:3px;background:linear-gradient(#e6e7ea,#d0d1d4)"></div>
<div class="a t13" style="left:33px;top:538px;color:#8e8e8e;font-weight:normal;letter-spacing:0.67px;text-shadow:1px 1px 0 #fafafa">help</div>
<div class="a" style="left:94px;top:533px;width:75px;height:26px;border:1px solid #8e8e8e;border-radius:3px;background:linear-gradient(#e6e7ea,#d0d1d4)"></div>
<div class="a t13" style="left:115px;top:538px;color:#8e8e8e;font-weight:normal;letter-spacing:0.55px;text-shadow:1px 1px 0 #fafafa">apply</div>
<div class="a" style="left:227px;top:533px;width:75px;height:26px;border:1px solid #8e8e8e;border-radius:3px;background:linear-gradient(#e6e7ea,#d0d1d4)"></div>
<div class="a t13" style="left:245px;top:538px;color:#8e8e8e;font-weight:normal;letter-spacing:0.20px;text-shadow:1px 1px 0 #fafafa">cancel</div>
<div class="a" style="left:0;top:570px;width:803px;height:18px;border:1px solid #8a8a8a;border-radius:2px;box-shadow:inset 1px 1px 0 #f5f5f5"></div>
<svg style="left:800px;top:568px" width="21" height="21" shape-rendering="crispEdges"><path d="M9 20h1v1h-1zM10 19h1v1h-1zM11 18h1v1h-1zM12 17h1v1h-1zM13 16h1v1h-1zM14 15h1v1h-1zM15 14h1v1h-1zM16 13h1v1h-1zM17 12h1v1h-1zM18 11h1v1h-1zM19 10h1v1h-1zM20 9h1v1h-1zM10 20h1v1h-1zM11 19h1v1h-1zM12 18h1v1h-1zM13 17h1v1h-1zM14 16h1v1h-1zM15 15h1v1h-1zM16 14h1v1h-1zM17 13h1v1h-1zM18 12h1v1h-1zM19 11h1v1h-1zM20 10h1v1h-1zM13 20h1v1h-1zM14 19h1v1h-1zM15 18h1v1h-1zM16 17h1v1h-1zM17 16h1v1h-1zM18 15h1v1h-1zM19 14h1v1h-1zM20 13h1v1h-1zM14 20h1v1h-1zM15 19h1v1h-1zM16 18h1v1h-1zM17 17h1v1h-1zM18 16h1v1h-1zM19 15h1v1h-1zM20 14h1v1h-1zM17 20h1v1h-1zM18 19h1v1h-1zM19 18h1v1h-1zM20 17h1v1h-1zM18 20h1v1h-1zM19 19h1v1h-1zM20 18h1v1h-1z" fill="#3c3c3c"/><path d="M8 20h1v1h-1zM9 19h1v1h-1zM10 18h1v1h-1zM11 17h1v1h-1zM12 16h1v1h-1zM13 15h1v1h-1zM14 14h1v1h-1zM15 13h1v1h-1zM16 12h1v1h-1zM17 11h1v1h-1zM18 10h1v1h-1zM19 9h1v1h-1zM20 8h1v1h-1zM12 20h1v1h-1zM13 19h1v1h-1zM14 18h1v1h-1zM15 17h1v1h-1zM16 16h1v1h-1zM17 15h1v1h-1zM18 14h1v1h-1zM19 13h1v1h-1zM20 12h1v1h-1zM16 20h1v1h-1zM17 19h1v1h-1zM18 18h1v1h-1zM19 17h1v1h-1zM20 16h1v1h-1z" fill="#ffffff"/></svg>
</body></html>
